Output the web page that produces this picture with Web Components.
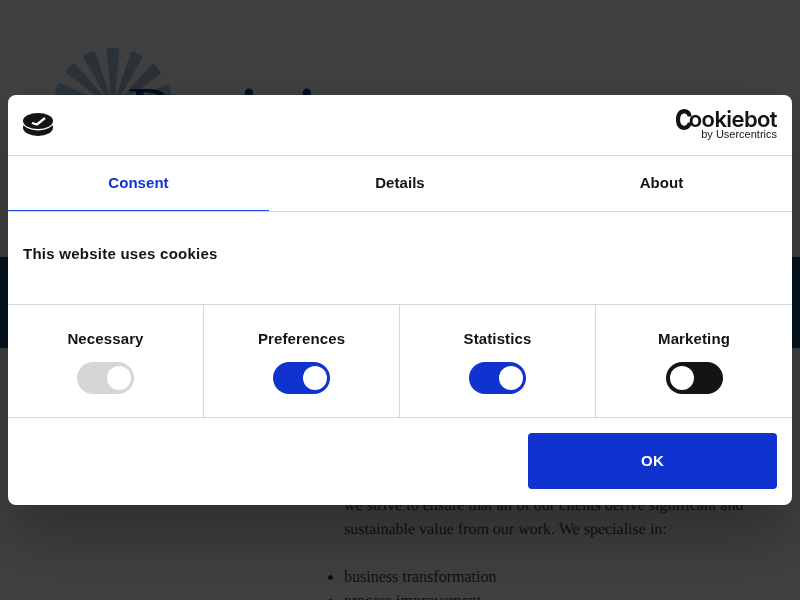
<!DOCTYPE html>
<html lang="en">
<head>
<meta charset="utf-8">
<title>Cookie consent</title>
<style>
  html, body { margin: 0; height: 600px; overflow: hidden; background: #fff; }
</style>
</head>
<body>

<site-page></site-page>

<cookie-dialog>
  <brand-bar slot="header"></brand-bar>
  <consent-tabs slot="tabs"></consent-tabs>
  <consent-category slot="categories" label="Necessary" state="locked"></consent-category>
  <consent-category slot="categories" label="Preferences" state="on"></consent-category>
  <consent-category slot="categories" label="Statistics" state="on"></consent-category>
  <consent-category slot="categories" label="Marketing" state="off"></consent-category>
</cookie-dialog>

<script>
class SitePage extends HTMLElement {
  constructor() {
    super();
    // fan of the logo, one wedge per angle
    const rays = [-96, -71, -47, -24, 0, 24, 48, 73, 97]
      .map(a => `<path transform="rotate(${a} 65 62)" d="M64.2 62 L58.6 4.5 Q58.4 2.4 60.4 2.2 Q65 1.8 69.6 2.2 Q71.6 2.4 71.4 4.5 L65.8 62 Z"/>`)
      .join('');
    this.attachShadow({mode: 'open'}).innerHTML = `
      <style>
        :host { display: block; font: 16px/24px "Liberation Serif", serif; color: #444; }
        header { height: 257px; box-sizing: border-box; padding: 46px 0 0 48px; display: flex; }
        svg { width: 130px; height: 130px; fill: #a8c4dc; flex: none; overflow: visible; }
        .name { margin: 29px 0 0 -51px; font-size: 80px; line-height: 80px; color: #0a3c6e; white-space: nowrap; }
        .name span { letter-spacing: -4px; }
        .band { height: 91px; background: #0a4c80; }
        main { padding: 122px 48px 0 344px; }
        p { margin: 24px 0 23px; text-rendering: geometricPrecision; }
        ul { margin: 23px 0; padding-left: 0; }
      </style>
      <header>
        <svg viewBox="0 0 130 130">${rays}</svg>
        <div class="name">Pasi<span>n</span>i</div>
      </header>
      <div class="band"></div>
      <main>
        <p>we strive to ensure that all of our clients derive significant and sustainable value from our work. We specialise in:</p>
        <ul>
          <li>business transformation</li>
          <li>process improvement</li>
        </ul>
      </main>`;
  }
}

class BrandBar extends HTMLElement {
  constructor() {
    super();
    this.attachShadow({mode: 'open'}).innerHTML = `
      <style>
        :host { display: flex; justify-content: space-between; align-items: flex-start; height: 60px; box-sizing: border-box; padding: 15px 15px 0; color: #141414; }
        svg { width: 30px; height: 23px; margin-top: 3px; }
        .logo { display: flex; flex-direction: column; align-items: flex-end; }
        .word { display: flex; align-items: center; height: 21px; margin-top: -1px; font: 600 22px/21px Inter, sans-serif; letter-spacing: -.6px; white-space: nowrap; }
        .c { display: block; width: 14px; font: 800 29px/21px Inter, sans-serif; letter-spacing: 0; transform: scaleX(.82); transform-origin: left center; }
        .by { font: 400 11px/12px "Liberation Sans", Arial, sans-serif; margin-top: -2px; }
      </style>
      <svg viewBox="0 0 30 23" aria-hidden="true">
        <ellipse cx="15" cy="14.5" rx="15" ry="8.5" fill="#141414"/>
        <ellipse cx="15" cy="9" rx="15.5" ry="8.5" fill="#fff"/>
        <ellipse cx="15" cy="8" rx="15" ry="8" fill="#141414"/>
        <path fill="none" stroke="#fff" stroke-width="2.3" d="M9 10 L14 11.5 L22 5"/>
      </svg>
      <div class="logo">
        <div class="word"><span class="c">C</span><span>ookiebot</span></div>
        <div class="by">by Usercentrics</div>
      </div>`;
  }
}

class ConsentTabs extends HTMLElement {
  constructor() {
    super();
    this.attachShadow({mode: 'open'}).innerHTML = `
      <style>
        :host { display: grid; grid-template-columns: 261px 262px 261px; height: 56px; box-sizing: border-box; border-bottom: 1px solid #d6d6d6; font: 700 15px/18px "Liberation Sans", Arial, sans-serif; letter-spacing: .05px; color: #141414; }
        div { display: flex; align-items: center; justify-content: center; padding-bottom: 1px; }
        .active { color: #1032cf; box-shadow: inset 0 -1px 0 #1f4fe6; }
      </style>
      <div class="active">Consent</div>
      <div>Details</div>
      <div>About</div>`;
  }
}

class ConsentCategory extends HTMLElement {
  constructor() {
    super();
    const state = this.getAttribute('state');
    const label = this.getAttribute('label');
    this.attachShadow({mode: 'open'}).innerHTML = `
      <style>
        :host { display: flex; flex-direction: column; align-items: center; padding-top: 25px; box-sizing: border-box; border-right: 1px solid #d6d6d6; font: 700 15px/18px "Liberation Sans", Arial, sans-serif; letter-spacing: .12px; color: #141414; }
        :host(:last-child) { border-right: 0; }
        .switch { display: flex; width: 57px; height: 32px; margin-top: 14px; padding: 4px; box-sizing: border-box; border-radius: 16px; background: #141414; }
        .switch.on, .switch.locked { justify-content: flex-end; padding-right: 3px; }
        .switch.on { background: #1032cf; }
        .switch.locked { background: #d6d6d6; }
        i { display: block; width: 24px; height: 24px; border-radius: 50%; background: #fff; }
      </style>
      <div>${label}</div>
      <div class="switch ${state}"><i></i></div>`;
  }
}

class CookieDialog extends HTMLElement {
  constructor() {
    super();
    this.attachShadow({mode: 'open'}).innerHTML = `
      <style>
        :host { position: fixed; inset: 0; display: flex; align-items: center; justify-content: center; background: rgba(0,0,0,.75); }
        .box { width: 784px; height: 410px; display: flex; flex-direction: column; background: #fff; border-radius: 8px; box-shadow: 0 32px 68px rgba(0,0,0,.3); font-family: "Liberation Sans", Arial, sans-serif; color: #141414; }
        .top { border-bottom: 1px solid #d6d6d6; }
        h1 { margin: 0; height: 93px; box-sizing: border-box; padding: 33px 15px 0; border-bottom: 1px solid #d6d6d6; font: 700 15px/18px "Liberation Sans", Arial, sans-serif; letter-spacing: .25px; }
        .cats { display: grid; grid-template-columns: repeat(4, 1fr); height: 113px; box-sizing: border-box; border-bottom: 1px solid #d6d6d6; }
        footer { display: flex; justify-content: flex-end; padding: 15px; }
        button { width: 249px; height: 56px; border: 0; border-radius: 4px; background: #1032cf; color: #fff; font: 700 15px/18px "Liberation Sans", Arial, sans-serif; letter-spacing: .3px; }
      </style>
      <div class="box" role="dialog">
        <div class="top"><slot name="header"></slot></div>
        <slot name="tabs"></slot>
        <h1>This website uses cookies</h1>
        <div class="cats"><slot name="categories"></slot></div>
        <footer><button>OK</button></footer>
      </div>`;
  }
}

customElements.define('site-page', SitePage);
customElements.define('brand-bar', BrandBar);
customElements.define('consent-tabs', ConsentTabs);
customElements.define('consent-category', ConsentCategory);
customElements.define('cookie-dialog', CookieDialog);
</script>
</body>
</html>
